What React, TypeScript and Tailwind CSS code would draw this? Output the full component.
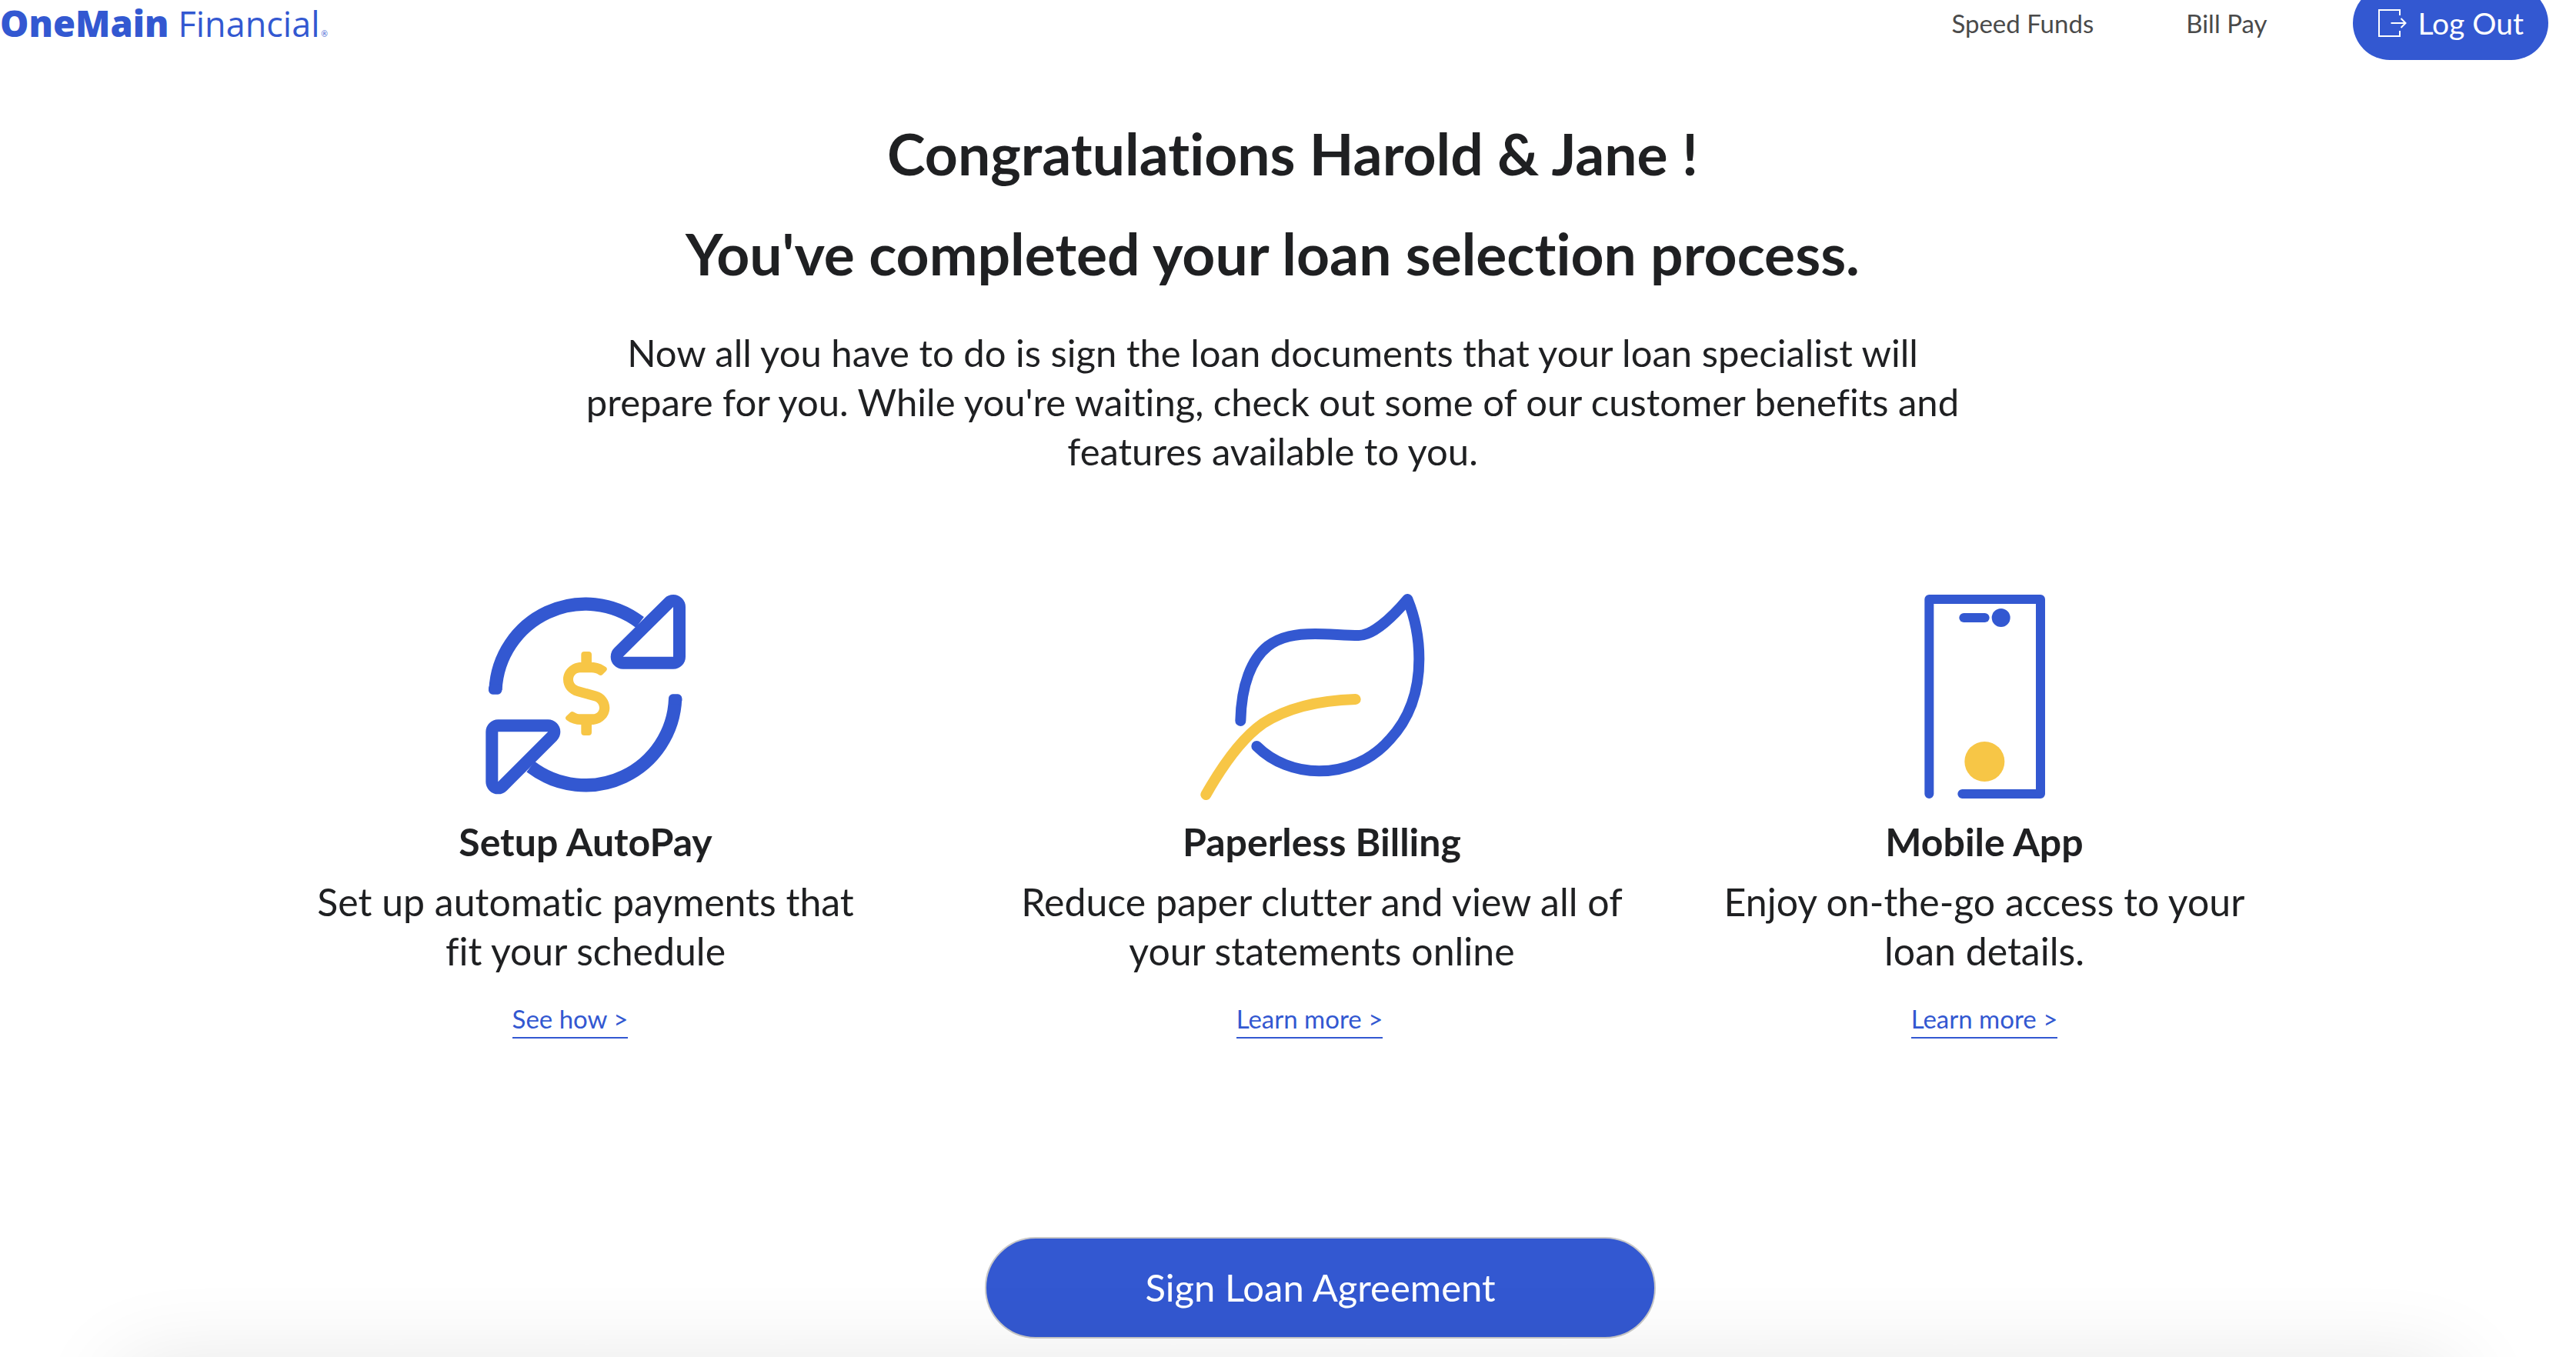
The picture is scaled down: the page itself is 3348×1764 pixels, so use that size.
import type { ReactNode } from "react";

const BLUE = "#3358d1";
const YELLOW = "#f7c646";

function LogOutIcon() {
  return (
    <svg width="38" height="38" viewBox="0 0 38 38" fill="none" stroke="currentColor" strokeWidth="2" aria-hidden="true">
      <path d="M29 9V2H2V36H29V29" />
      <path d="M17.500 19H36.500M30.500 13L36.500 19L30.500 25" />
    </svg>
  );
}

function AutoPayIcon() {
  return (
    <svg width="260" height="268" viewBox="96 66 780 804" fill="none" aria-hidden="true">
      <g stroke={BLUE} strokeWidth="52">
        <path d="M135 440A351 351 0 0 1 698 177" />
        <path d="M836 474A351 351 0 0 1 272 740" />
      </g>
      <rect x="108" y="418" width="52" height="40" rx="16" fill={BLUE} />
      <rect x="810" y="457" width="52" height="40" rx="16" fill={BLUE} />
      <g stroke={BLUE} strokeWidth="96" strokeLinejoin="round">
        <path d="M828 117V311H632Z" />
        <path d="M145 604H340L145 799Z" />
      </g>
      <path d="M828 117V311H632Z" fill="#fff" />
      <path d="M145 604H340L145 799Z" fill="#fff" />
      <path
        fill={YELLOW}
        d="M469 333C430 333 399 364 399 400C399 431 420 457 452 465L520 484C532 488 540 498 540 510C540 524 529 535 514 535H466C457 535 448 532 441 527Q433 522 427 528L411 543Q404 551 412 558C428 570 447 576 469 576V606Q469 618 481 618H498Q510 618 510 606V576C548 576 580 547 580 510C580 480 559 454 531 446L458 426C446 422 438 412 438 400C438 386 449 373 465 373H510C520 373 530 376 537 381Q546 387 552 381L567 366Q573 358 566 352C550 340 532 333 510 333V303Q510 291 498 291H481Q469 291 469 303Z"
      />
    </svg>
  );
}

function LeafIcon() {
  return (
    <svg width="316" height="268" viewBox="62 66 948 804" fill="none" strokeWidth="42" strokeLinecap="round" strokeLinejoin="round" aria-hidden="true">
      <path
        stroke={BLUE}
        d="M219 561C222 420 262 320 325 270C375 232 435 222 510 222C560 222 620 227 680 228C730 228 800 170 870 87C900 160 915 240 915 320C915 460 870 560 800 635C730 715 630 757 525 757C435 757 345 723 282 660"
      />
      <path stroke={YELLOW} d="M84 849C140 750 215 635 305 572C390 517 500 482 667 477" />
    </svg>
  );
}

function PhoneIcon() {
  return (
    <svg width="157" height="268" viewBox="119 66 471 804" fill="none" strokeWidth="36" strokeLinecap="round" strokeLinejoin="round" aria-hidden="true">
      <path stroke={BLUE} d="M138 846V87H572V846H267" />
      <path stroke={BLUE} d="M273 159H355" />
      <circle cx="418" cy="159" r="36" fill={BLUE} />
      <circle cx="354" cy="720" r="78" fill={YELLOW} />
    </svg>
  );
}

type BenefitProps = {
  icon: ReactNode;
  title: string;
  text: string;
  link: string;
  className: string;
  linkClassName?: string;
};

function Benefit({ icon, title, text, link, className, linkClassName = "" }: BenefitProps) {
  return (
    <article className={`flex flex-col items-center text-center ${className}`}>
      {icon}
      <h3 className="mt-[22px] text-[50px] leading-[64px] font-bold">{title}</h3>
      <p className="mt-3.5 text-[50px] leading-[64px]">{text}</p>
      <div className={`mt-9 ${linkClassName}`}>
        <a href="#" className="block border-b-2 border-[#3358d1] pb-1 text-[33px] leading-10 text-[#3358d1]">
          {link}
        </a>
      </div>
    </article>
  );
}

export default function App() {
  return (
    <div className="relative min-h-screen overflow-hidden bg-white pb-6 font-['Lato',sans-serif] text-[#1f2022] [font-variant-ligatures:none]">
      <header className="flex h-15 items-center justify-between pr-9">
        <a href="#" className="flex items-baseline font-['Open_Sans',sans-serif] text-[#3358d1]">
          <span className="text-[47px] leading-15 font-extrabold">OneMain</span>
          <span className="ml-3 text-[45px] leading-15">Financial</span>
          <span className="ml-0.5 text-[10px] leading-none">®</span>
        </a>
        <nav className="flex items-center">
          <a href="#" className="text-[33px] leading-10 text-[#4a4a4a]">Speed Funds</a>
          <a href="#" className="ml-30 text-[33px] leading-10 text-[#4a4a4a]">Bill Pay</a>
          <button type="button" className="ml-28 flex h-24 items-center gap-3.5 rounded-full bg-[#3358d1] px-8 text-[39px] text-white">
            <LogOutIcon />
            Log Out
          </button>
        </nav>
      </header>

      <main className="pt-[95px]">
        <section className="flex flex-col items-center pr-10 text-center">
          <h1 className="pl-13 text-[75px] leading-[88px] font-bold">Congratulations Harold &amp; Jane !</h1>
          <h2 className="mt-[42px] text-[75px] leading-[88px] font-bold">You've completed your loan selection process.</h2>
          <p className="mt-[53px] max-w-[1820px] text-[49px] leading-[64px]">
            Now all you have to do is sign the loan documents that your loan specialist will prepare for you. While
            you're waiting, check out some of our customer benefits and features available to you.
          </p>
        </section>

        <section className="mt-[154px] flex justify-center pr-2">
          <Benefit
            icon={<AutoPayIcon />}
            title="Setup AutoPay"
            text="Set up automatic payments that fit your schedule"
            link="See how >"
            className="w-[720px]"
            linkClassName="pr-10"
          />
          <Benefit
            icon={<LeafIcon />}
            title="Paperless Billing"
            text="Reduce paper clutter and view all of your statements online"
            link="Learn more >"
            className="ml-[197px] w-[800px]"
            linkClassName="pr-8"
          />
          <Benefit
            icon={<PhoneIcon />}
            title="Mobile App"
            text="Enjoy on-the-go access to your loan details."
            link="Learn more >"
            className="ml-[101px] w-[720px]"
          />
        </section>

        <div className="mt-[258px] flex justify-center pl-21">
          <button type="button" className="h-33 w-[872px] rounded-full border-2 border-[#c8c8c8] bg-[#3358d1] text-[49px] text-white">
            Sign Loan Agreement
          </button>
        </div>
      </main>

      <div className="pointer-events-none absolute inset-x-40 top-full mt-4 h-80 bg-white shadow-[0_0_120px_rgba(0,0,0,0.12)]" />
    </div>
  );
}
